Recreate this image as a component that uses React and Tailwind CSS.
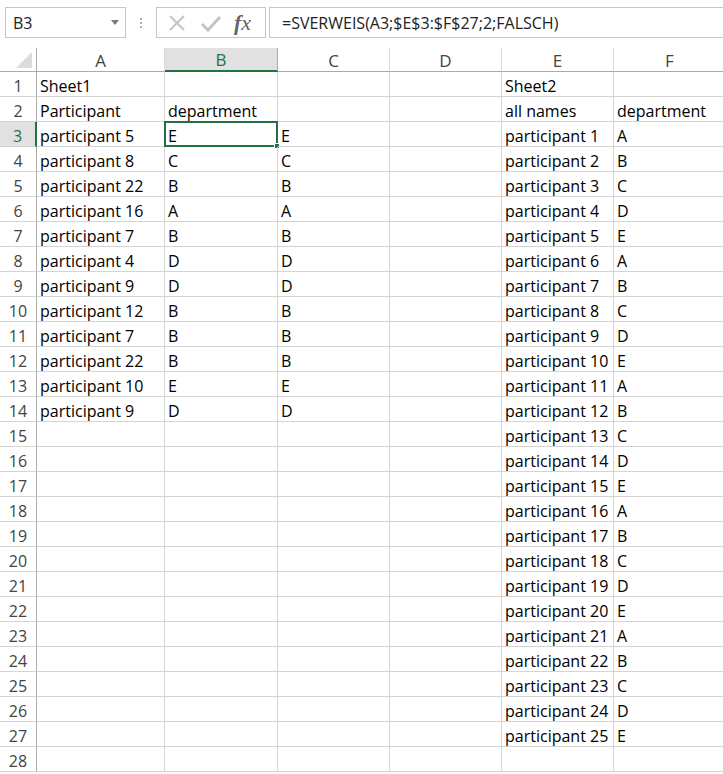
import React from "react";

const font = { fontFamily: '"Open Sans", "Liberation Sans", sans-serif' };

const colA = ["Sheet1", "Participant", "participant 5", "participant 8", "participant 22", "participant 16", "participant 7", "participant 4", "participant 9", "participant 12", "participant 7", "participant 22", "participant 10", "participant 9"];
const colB = ["", "department", "E", "C", "B", "A", "B", "D", "D", "B", "B", "B", "E", "D"];
const colC = ["", "", "E", "C", "B", "A", "B", "D", "D", "B", "B", "B", "E", "D"];
const letters = ["A", "B", "C", "D", "E"];

function cellValue(row, col) {
  const i = row - 1;
  if (col === 0) return colA[i] || "";
  if (col === 1) return colB[i] || "";
  if (col === 2) return colC[i] || "";
  if (col === 4) {
    if (row === 1) return "Sheet2";
    if (row === 2) return "all names";
    if (row <= 27) return `participant ${row - 2}`;
  }
  if (col === 5) {
    if (row === 2) return "department";
    if (row >= 3 && row <= 27) return letters[(row - 3) % 5];
  }
  return "";
}

const cols = ["A", "B", "C", "D", "E", "F"];
const rows = Array.from({ length: 28 }, (_, i) => i + 1);

function FormulaBar() {
  return (
    <div className="h-[48px] flex items-start pt-[7px] pl-[5px] bg-white">
      <div className="w-[121px] h-[31px] border border-[#c6c6c6] flex items-center justify-between pl-[7px] pr-[6px] text-[16px] text-[#222]">
        <span>B3</span>
        <svg width="8" height="5" viewBox="0 0 8 5"><path d="M0 0h8L4 5z" fill="#7a7a7a" /></svg>
      </div>
      <div className="w-[30px] h-[31px] flex flex-col items-center justify-center gap-[2px]">
        <span className="w-[2px] h-[2px] bg-[#b0b0b0]" />
        <span className="w-[2px] h-[2px] bg-[#b0b0b0]" />
        <span className="w-[2px] h-[2px] bg-[#b0b0b0]" />
      </div>
      <div className="w-[110px] h-[31px] border border-[#c6c6c6] flex items-center pl-[10px]">
        <svg width="20" height="20" viewBox="0 0 20 20" className="mr-[13px]">
          <path d="M3 3L17 17M17 3L3 17" stroke="#c4c4c4" strokeWidth="2" />
        </svg>
        <svg width="22" height="20" viewBox="0 0 22 20" className="mr-[12px]">
          <path d="M2 11L8 17L20 4" stroke="#c4c4c4" strokeWidth="3" fill="none" />
        </svg>
        <span className="text-[#666] text-[22px] italic leading-none" style={{ fontFamily: '"Liberation Serif", serif' }}>
          <span className="font-bold">f</span>x
        </span>
      </div>
      <div className="flex-1 ml-[3px] h-[31px] border border-[#c6c6c6] border-r-0 flex items-center pl-[12px] text-[16px] text-[#222] whitespace-nowrap">
        =SVERWEIS(A3;$E$3:$F$27;2;FALSCH)
      </div>
    </div>
  );
}

export default function App() {
  return (
    <div className="w-[723px] h-[774px] overflow-hidden bg-white" style={font}>
      <FormulaBar />
      <div className="grid grid-cols-[37px_128px_113px_112px_112px_112px_112px] w-[726px]">
        <div className="h-[24px] border-r border-b border-[#ababab] relative">
          <svg width="16" height="16" viewBox="0 0 16 16" className="absolute right-[4px] bottom-[3px]">
            <path d="M16 0V16H0z" fill="#dcdcdc" />
          </svg>
        </div>
        {cols.map((c) => (
          <div
            key={c}
            className={
              c === "B"
                ? "h-[24px] pt-[2px] bg-[#e1e1e1] border-r border-[#ababab] border-b-2 border-b-[#217346] flex items-center justify-center text-[17px] text-[#217346]"
                : "h-[24px] pt-[2px] border-r border-r-[#dadada] border-b border-b-[#ababab] flex items-center justify-center text-[17px] text-[#444]"
            }
          >
            {c}
          </div>
        ))}
        {rows.map((r) => (
          <React.Fragment key={r}>
            <div
              className={
                r === 3
                  ? "h-[25px] pt-[3px] bg-[#e1e1e1] border-r-2 border-r-[#217346] border-b border-b-[#d4d4d4] flex items-center justify-center text-[16px] text-[#217346]"
                  : "h-[25px] pt-[3px] border-r border-r-[#ababab] border-b border-b-[#d4d4d4] flex items-center justify-center text-[16px] text-[#444]"
              }
            >
              {r}
            </div>
            {cols.map((c, ci) => (
              <div
                key={c}
                className="h-[25px] pt-[3px] relative border-r border-b border-[#d4d4d4] flex items-center pl-[3px] text-[16px] text-black whitespace-nowrap"
              >
                {cellValue(r, ci)}
                {r === 3 && ci === 1 && (
                  <div className="absolute -left-px -top-px w-[114px] h-[26px] border-2 border-[#217346]">
                    <span className="absolute -right-[4px] -bottom-[4px] w-[6px] h-[6px] bg-[#217346] border border-white" />
                  </div>
                )}
              </div>
            ))}
          </React.Fragment>
        ))}
      </div>
    </div>
  );
}
